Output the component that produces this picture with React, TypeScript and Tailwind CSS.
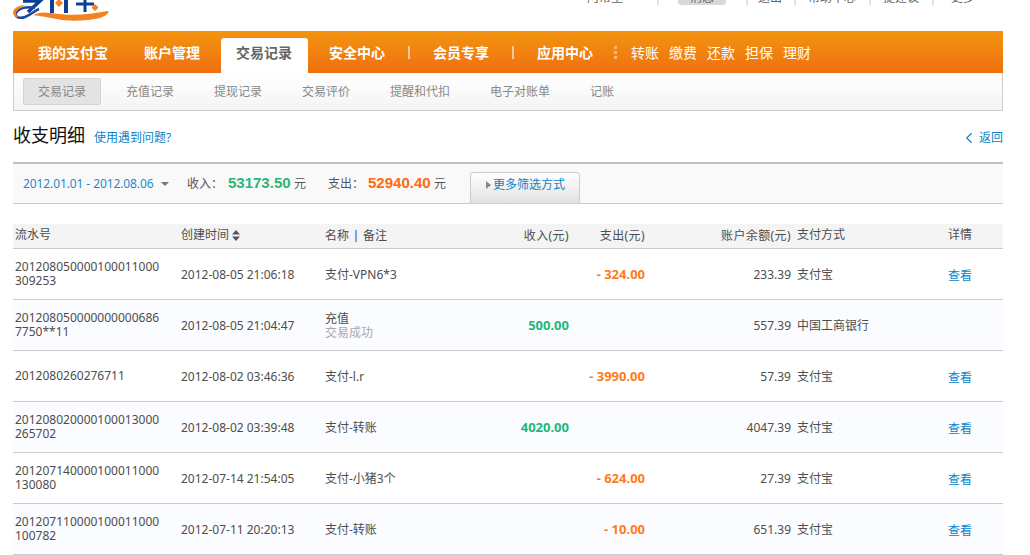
import { ChevronLeft } from "lucide-react";

const mainTabs = ["我的支付宝", "账户管理", "交易记录", "安全中心"];
const quickLinks = ["转账", "缴费", "还款", "担保", "理财"];
const subTabs = ["交易记录", "充值记录", "提现记录", "交易评价", "提醒和代扣", "电子对账单", "记账"];

const rows = [
  { no: "201208050000100011000309253", time: "2012-08-05 21:06:18", name: "支付-VPN6*3", out: "- 324.00", balance: "233.39", method: "支付宝", link: true },
  { no: "2012080500000000006867750**11", time: "2012-08-05 21:04:47", name: "充值", note: "交易成功", income: "500.00", balance: "557.39", method: "中国工商银行", link: false },
  { no: "2012080260276711", time: "2012-08-02 03:46:36", name: "支付-l.r", out: "- 3990.00", balance: "57.39", method: "支付宝", link: true },
  { no: "201208020000100013000265702", time: "2012-08-02 03:39:48", name: "支付-转账", income: "4020.00", balance: "4047.39", method: "支付宝", link: true },
  { no: "201207140000100011000130080", time: "2012-07-14 21:54:05", name: "支付-小猪3个", out: "- 624.00", balance: "27.39", method: "支付宝", link: true },
  { no: "201207110000100011000100782", time: "2012-07-11 20:20:13", name: "支付-转账", out: "- 10.00", balance: "651.39", method: "支付宝", link: true },
];

const columns = "grid grid-cols-[168px_144px_165px_80px_76px_145px_157px_55px] items-center";

function Logo() {
  return (
    <svg width="100" height="22" viewBox="0 0 100 22" className="shrink-0">
      {/* blue marks, the top of the logo is cut off by the page */}
      <path d="M10 1h17L15 12" fill="none" stroke="#0d3f97" strokeWidth="3.5" />
      <path d="M39 0v13M53 0v13" fill="none" stroke="#0d3f97" strokeWidth="4" />
      <path d="M63 4h18M72 0v12" fill="none" stroke="#0d3f97" strokeWidth="3" />
      <path d="M46 -1l4 4-4 4-4-4zM82 4l3.5 3.5L82 11l-3.5-3.5z" fill="#f58220" />
      {/* swoosh */}
      <path d="M22 8C14 6 6 8 3 13c-2 4 4 6 9 4 6-2 9-6 14-8" fill="none" stroke="#17479e" strokeWidth="2.5" />
      <path d="M0 12C1 8 6 5 13 5 8 7 3 10 3 14c0 2 2 3 4 3-4 1-7-1-7-5z" fill="#f58220" />
      <path d="M20 15c6-3 12-3 18-2 18 3 38 2 56-2 2 0 2 1 1 2-3 4-10 6-20 7-12 1-22 1-32-1-10-2-15-3-23-4z" fill="#f58220" />
    </svg>
  );
}

function TopLinks() {
  const sep = <span className="block w-[2px] h-[14px] bg-[#e0e4ea]" />;
  return (
    <div className="ml-[474px] mt-[-9px] flex items-center h-[14px] text-[12px] leading-[14px] text-[#666] whitespace-nowrap">
      <span className="w-[70px]">阿帮里</span>
      {sep}
      <span className="ml-[19px] w-[48px] h-[14px] bg-[#d8d8d8] rounded-[3px] text-center">消息</span>
      <span className="ml-[20px]">{sep}</span>
      <span className="ml-[10px]">退出</span>
      <span className="ml-[12px]">{sep}</span>
      <span className="ml-[12px]">帮助中心</span>
      <span className="ml-[13px]">{sep}</span>
      <span className="ml-[12px]">提建议</span>
      <span className="ml-[13px]">{sep}</span>
      <span className="ml-[17px]">更多</span>
    </div>
  );
}

function MainNav() {
  return (
    <div className="h-[42px] pl-[10px] flex items-end gap-[6px] bg-gradient-to-b from-[#f3940f] to-[#ee6f10] text-[14px] leading-[20px] text-white">
      {mainTabs.map((t) =>
        t === "交易记录" ? (
          <div key={t} className="h-[35px] w-[87px] px-[15px] pt-[5px] bg-white rounded-t-[3px] text-[#666] font-bold">{t}</div>
        ) : (
          <div key={t} className="h-[35px] px-[15px] pt-[5px] font-bold">{t}</div>
        )
      )}
      <span className="self-center w-[2px] h-[13px] ml-[2px] mr-[2px] mt-[1px] bg-[#fbc895]" />
      <div className="h-[35px] px-[15px] pt-[5px] font-bold">会员专享</div>
      <span className="self-center w-[2px] h-[13px] mx-[2px] bg-[#fbc895] mt-[1px]" />
      <div className="h-[35px] px-[15px] pt-[5px] font-bold">应用中心</div>
      <div className="self-center flex flex-col gap-[2px] mt-[1px] mr-[8px]">
        <span className="w-[3px] h-[3px] bg-[#fbb56f]" />
        <span className="w-[3px] h-[3px] bg-[#fbb56f]" />
        <span className="w-[3px] h-[3px] bg-[#fbb56f]" />
      </div>
      <div className="flex gap-[10px] h-[35px] pt-[5px]">
        {quickLinks.map((q) => (
          <span key={q}>{q}</span>
        ))}
      </div>
    </div>
  );
}

function SubNav() {
  return (
    <div className="h-[38px] pl-[9px] flex items-start gap-[10px] pt-[5px] border-x border-b border-[#ccc] bg-gradient-to-b from-white to-[#f4f4f4] text-[12px] text-[#888]">
      {subTabs.map((t, i) => (
        <div
          key={t}
          className={
            i === 0
              ? "h-[27px] px-[14px] leading-[25px] border border-[#d4d4d4] rounded-[2px] bg-[#e3e3e3]"
              : "h-[27px] px-[15px] leading-[27px]"
          }
        >
          {t}
        </div>
      ))}
    </div>
  );
}

function FilterBar() {
  return (
    <div className="h-[42px] mt-[8px] border-t-2 border-b border-t-[#c0c0c0] border-b-[#ccc] bg-[#f9f9f9] flex items-end pl-[10px] text-[12px] text-[#555]">
      <div className="h-[39px] flex items-center">
        <span className="w-[131px] text-[#1e8bd0] whitespace-nowrap tracking-[-0.1px]">2012.01.01 - 2012.08.06</span>
        <span className="ml-[7px] border-x-[4px] border-t-[4px] border-x-transparent border-t-[#777]" />
        <span className="ml-[18px] w-[41px]">收入：</span>
        <span className="w-[62px] font-['Liberation_Sans',sans-serif] text-[15px] font-bold text-[#2cb67a]">53173.50</span>
        <span className="ml-[4px]">元</span>
        <span className="ml-[22px] w-[40px]">支出：</span>
        <span className="w-[62px] font-['Liberation_Sans',sans-serif] text-[15px] font-bold text-[#ff6a10]">52940.40</span>
        <span className="ml-[4px]">元</span>
      </div>
      <div className="ml-[24px] w-[110px] h-[31px] pl-[15px] pb-[6px] flex items-center gap-[2px] border border-b-0 border-[#ccc] rounded-t-[4px] bg-gradient-to-b from-white to-[#e2e2e2] text-[#0a84c8]">
        <span className="border-y-[4px] border-l-[5px] border-y-transparent border-l-[#888]" />
        更多筛选方式
      </div>
    </div>
  );
}

export default function App() {
  return (
    <div className="w-[1030px] h-[555px] overflow-hidden bg-white font-['Noto_Sans','Noto_Sans_CJK_SC',sans-serif] text-[12px] text-[#4d4d4d]">
      <div className="ml-[13px] w-[990px]">
        <div className="h-[31px] overflow-hidden flex items-start">
          <Logo />
          <TopLinks />
        </div>
        <MainNav />
        <SubNav />

        <div className="h-[38px] mt-[5px] flex items-center">
          <h1 className="text-[18px] leading-[24px] text-[#111]">收支明细</h1>
          <a className="ml-[9px] mt-[5px] text-[#0a84c8]">使用遇到问题?</a>
          <a className="ml-auto mt-[5px] flex items-center text-[#0a84c8]">
            <ChevronLeft className="w-[18px] h-[18px] mr-[1px]" strokeWidth={1.5} />
            返回
          </a>
        </div>

        <FilterBar />

        <div className={`${columns} h-[25px] mt-[20px] bg-[#f4f4f4] border-b border-[#ccc] leading-[24px]`}>
          <div className="pl-[2px] mt-[-2px]">流水号</div>
          <div className="flex items-center gap-[3px] mt-[-2px]">
            创建时间
            <svg width="8" height="11" viewBox="0 0 8 11" fill="#555">
              <path d="M4 0l4 4.5H0zM4 11L0 6.5h8z" />
            </svg>
          </div>
          <div className="flex items-center">
            名称
            <span className="ml-[6px] mr-[6px] w-[2px] h-[12px] bg-[#7aa5d8]" />
            备注
          </div>
          <div className="text-right pr-[1px] tracking-[0.4px]">收入(元)</div>
          <div className="text-right pr-[1px] tracking-[0.4px]">支出(元)</div>
          <div className="text-right tracking-[0.4px]">账户余额(元)</div>
          <div className="pl-[6px] mt-[-2px]">支付方式</div>
          <div className="mt-[-2px]">详情</div>
        </div>

        {rows.map((r, i) => (
          <div
            key={r.time}
            className={`${columns} h-[51px] border-b border-[#ccc] leading-[14px] ${i % 2 === 1 ? "bg-[#fbfcff]" : "bg-white"}`}
          >
            <div className="pl-[2px] w-[148px] break-all">{r.no}</div>
            <div className="mt-[2px]">{r.time}</div>
            <div className="mt-[2px]">
              {r.name}
              {r.note && <div className="text-[#aaa]">{r.note}</div>}
            </div>
            <div className="text-right font-bold text-[13px] text-[#22b77c] pr-[1px]">{r.income}</div>
            <div className="text-right font-bold text-[13px] text-[#ff7a1a] pr-[1px]">{r.out}</div>
            <div className="text-right mt-[2px]">{r.balance}</div>
            <div className="pl-[6px] mt-[2px]">{r.method}</div>
            <div className="mt-[4px]">{r.link && <a className="text-[#0a84c8]">查看</a>}</div>
          </div>
        ))}
      </div>
    </div>
  );
}
